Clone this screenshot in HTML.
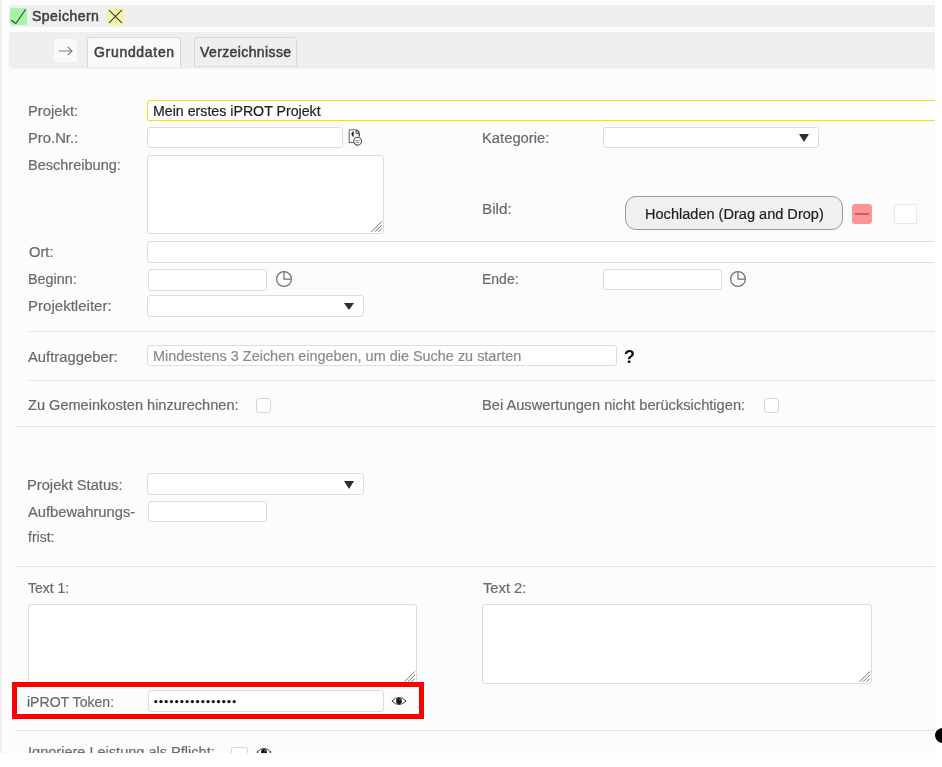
<!DOCTYPE html>
<html><head><meta charset="utf-8"><style>
html,body{margin:0;padding:0;}
body{width:942px;height:767px;overflow:hidden;background:#fff;position:relative;font-family:"Liberation Sans",sans-serif;}
#c{position:absolute;left:0;top:0;width:935px;height:753px;overflow:hidden;background:#fcfcfc;}
.b{position:absolute;}
.t{position:absolute;white-space:pre;will-change:transform;line-height:20px;transform-origin:0 0;font-family:"Liberation Sans",sans-serif;}
</style></head><body>
<div id="c">
<div class="b" style="left:0px;top:0px;width:2px;height:753px;background:#efefef;"></div>
<div class="b" style="left:9px;top:5px;width:940px;height:22px;background:#efefef;border-radius:3px;"></div>
<div class="b" style="left:10px;top:8px;width:17px;height:17px;background:#a4f5a4;border-radius:3px;"></div>
<svg class="b" style="left:10px;top:8px" width="17" height="17"><path d="M1 12.3 L5.8 15.5 L15.7 1.3" fill="none" stroke="#383838" stroke-width="1.05"/></svg>
<div class="b" style="left:107px;top:8px;width:17px;height:17px;background:#f4f4a6;border-radius:3px;"></div>
<svg class="b" style="left:107px;top:8px" width="17" height="17"><path d="M2 2.1 L14.8 14.8 M14.8 2.1 L2 14.8" fill="none" stroke="#383838" stroke-width="1.05"/></svg>
<div class="b" style="left:9px;top:32px;width:940px;height:36px;background:#efefef;border-radius:4px;box-shadow:0 1px 1px rgba(0,0,0,0.04);"></div>
<div class="b" style="left:54px;top:39px;width:23px;height:23px;background:#fafafa;border-radius:3px;"></div>
<svg class="b" style="left:58px;top:45px" width="16" height="12"><path d="M1 6 H14 M9.8 1.8 L14 6 L9.8 10.2" fill="none" stroke="#7a7a7a" stroke-width="1.1"/></svg>
<div class="b" style="left:87px;top:37px;width:94px;height:30px;background:#f9f9f9;border:1px solid #d9d9d9;border-bottom:none;border-radius:3px 3px 0 0;box-sizing:border-box;"></div>
<div class="b" style="left:194px;top:37px;width:103px;height:30px;background:#efefef;border:1px solid #d9d9d9;border-radius:3px 3px 0 0;box-sizing:border-box;"></div>
<div class="b" style="left:147px;top:100px;width:853px;height:21px;border:1px solid #ffdc10;border-radius:3px;background:#fff;box-sizing:border-box;box-shadow:0 0 0.8px rgba(255,215,0,0.6);"></div>
<div class="b" style="left:147px;top:127px;width:196px;height:21px;border:1px solid #dcdcdc;border-radius:3px;background:#fff;box-sizing:border-box;"></div>
<svg class="b" style="left:347px;top:128px" width="16" height="18"><path d="M2.2 1.8 H8.5 M2.2 1.8 V14.5 H6.5" fill="none" stroke="#6a6a6a" stroke-width="1.1"/><path d="M8.6 1.9 Q12 3 12.3 6.5 V8.5" fill="none" stroke="#3a3a3a" stroke-width="1.3"/><path d="M9 2.5 V5.5 H11.5" fill="none" stroke="#555" stroke-width="1"/><path d="M6.2 3.6 Q3.2 5.8 6.2 8.6 Z" fill="#2a2a2a" stroke="#2a2a2a" stroke-width="0.8"/><circle cx="10.6" cy="13.2" r="3.9" fill="#fff" stroke="#4a4a4a" stroke-width="1.1"/><path d="M8.6 12.6 H12.6 M8.8 14.4 H12.4" stroke="#777" stroke-width="0.9"/></svg>
<div class="b" style="left:147px;top:155px;width:237px;height:79px;border:1px solid #dcdcdc;border-radius:3px;background:#fff;box-sizing:border-box;"></div>
<svg class="b" style="left:370px;top:220px" width="14" height="14"><path d="M1.5 11.8 L11.8 1.5 M5 11.8 L11.8 5 M8.5 11.8 L11.8 8.5" stroke="#5e5e5e" stroke-width="0.9" fill="none"/></svg>
<div class="b" style="left:603px;top:127px;width:216px;height:21px;border:1px solid #dcdcdc;border-radius:3px;background:#fff;box-sizing:border-box;"></div>
<svg class="b" style="left:799px;top:134px" width="10" height="8"><polygon points="0,0 10,0 5.0,8" fill="#2e2e2e"/></svg>
<div class="b" style="left:625px;top:196px;width:218px;height:34px;background:#f0f0f0;border:1px solid #9a9a9a;border-radius:11px;box-sizing:border-box;"></div>
<div class="b" style="left:852px;top:204px;width:20px;height:20px;background:#ff9494;border-radius:3px;"></div>
<div class="b" style="left:855px;top:213px;width:14px;height:2px;background:#b06a6a;"></div>
<div class="b" style="left:894px;top:204px;width:23px;height:20px;background:#fff;border:1px solid #e9e9e9;box-sizing:border-box;box-shadow:0 0 1px rgba(0,0,0,0.06);"></div>
<div class="b" style="left:147px;top:241px;width:853px;height:22px;border:1px solid #dcdcdc;border-radius:3px;background:#fff;box-sizing:border-box;"></div>
<div class="b" style="left:148px;top:269px;width:119px;height:22px;border:1px solid #dcdcdc;border-radius:3px;background:#fff;box-sizing:border-box;"></div>
<svg class="b" style="left:275px;top:270px" width="18" height="18"><circle cx="9" cy="9" r="7.4" fill="none" stroke="#707070" stroke-width="1.25"/><path d="M9 2 V9.2 H16" fill="none" stroke="#707070" stroke-width="1.25"/></svg>
<div class="b" style="left:603px;top:269px;width:119px;height:21px;border:1px solid #dcdcdc;border-radius:3px;background:#fff;box-sizing:border-box;"></div>
<svg class="b" style="left:729px;top:270px" width="18" height="18"><circle cx="9" cy="9" r="7.4" fill="none" stroke="#707070" stroke-width="1.25"/><path d="M9 2 V9.2 H16" fill="none" stroke="#707070" stroke-width="1.25"/></svg>
<div class="b" style="left:147px;top:295px;width:217px;height:22px;border:1px solid #dcdcdc;border-radius:3px;background:#fff;box-sizing:border-box;"></div>
<svg class="b" style="left:344px;top:303px" width="10" height="7"><polygon points="0,0 10,0 5.0,7" fill="#2e2e2e"/></svg>
<div class="b" style="left:28px;top:331px;width:910px;height:1px;background:#e6e6e6;"></div>
<div class="b" style="left:147px;top:345px;width:470px;height:21px;border:1px solid #dcdcdc;border-radius:3px;background:#fff;box-sizing:border-box;"></div>
<div class="b" style="left:28px;top:380px;width:910px;height:1px;background:#e6e6e6;"></div>
<div class="b" style="left:256px;top:398px;width:15px;height:15px;border:1px solid #d6d6d6;border-radius:3px;background:#fff;box-sizing:border-box;"></div>
<div class="b" style="left:764px;top:398px;width:15px;height:15px;border:1px solid #d6d6d6;border-radius:3px;background:#fff;box-sizing:border-box;"></div>
<div class="b" style="left:17px;top:426px;width:920px;height:1px;background:#e3e3e3;"></div>
<div class="b" style="left:147px;top:473px;width:217px;height:22px;border:1px solid #dcdcdc;border-radius:3px;background:#fff;box-sizing:border-box;"></div>
<svg class="b" style="left:344px;top:481px" width="10" height="8"><polygon points="0,0 10,0 5.0,8" fill="#2e2e2e"/></svg>
<div class="b" style="left:148px;top:501px;width:119px;height:21px;border:1px solid #dcdcdc;border-radius:3px;background:#fff;box-sizing:border-box;"></div>
<div class="b" style="left:17px;top:566px;width:920px;height:0px;border-top:1px dotted #d0d0d0;"></div>
<div class="b" style="left:28px;top:604px;width:389px;height:80px;border:1px solid #dcdcdc;border-radius:3px;background:#fff;box-sizing:border-box;"></div>
<svg class="b" style="left:403px;top:670px" width="14" height="14"><path d="M1.5 11.8 L11.8 1.5 M5 11.8 L11.8 5 M8.5 11.8 L11.8 8.5" stroke="#5e5e5e" stroke-width="0.9" fill="none"/></svg>
<div class="b" style="left:482px;top:604px;width:390px;height:80px;border:1px solid #dcdcdc;border-radius:3px;background:#fff;box-sizing:border-box;"></div>
<svg class="b" style="left:858px;top:670px" width="14" height="14"><path d="M1.5 11.8 L11.8 1.5 M5 11.8 L11.8 5 M8.5 11.8 L11.8 8.5" stroke="#5e5e5e" stroke-width="0.9" fill="none"/></svg>
<div class="b" style="left:12px;top:682px;width:412px;height:37px;border:5px solid #ff0000;box-sizing:border-box;background:#fcfcfc;"></div>
<div class="b" style="left:148px;top:690px;width:236px;height:22px;border:1px solid #dcdcdc;border-radius:3px;background:#fff;box-sizing:border-box;"></div>
<svg class="b" style="left:391px;top:696px" width="16" height="10"><path d="M0.9 5 Q8 -2 15.1 5 Q8 12 0.9 5 Z" fill="#fff" stroke="#3a3a3a" stroke-width="1"/><circle cx="8" cy="5" r="2.9" fill="#111"/><circle cx="9" cy="3.8" r="0.8" fill="#888"/></svg>
<div class="b" style="left:17px;top:730px;width:920px;height:0px;border-top:1px dotted #d0d0d0;"></div>
<div class="b" style="left:231px;top:747px;width:17px;height:15px;border:1px solid #d6d6d6;border-radius:3px;background:#fff;box-sizing:border-box;"></div>
<svg class="b" style="left:256px;top:747px" width="16" height="10"><path d="M0.9 5 Q8 -2 15.1 5 Q8 12 0.9 5 Z" fill="#fff" stroke="#3a3a3a" stroke-width="1"/><circle cx="8" cy="5" r="2.9" fill="#111"/><circle cx="9" cy="3.8" r="0.8" fill="#888"/></svg>
<svg class="b" style="left:150px;top:696px" width="92" height="12"><circle cx="5.75" cy="5.6" r="1.65" fill="#111"/><circle cx="10.98" cy="5.6" r="1.65" fill="#111"/><circle cx="16.21" cy="5.6" r="1.65" fill="#111"/><circle cx="21.44" cy="5.6" r="1.65" fill="#111"/><circle cx="26.67" cy="5.6" r="1.65" fill="#111"/><circle cx="31.90" cy="5.6" r="1.65" fill="#111"/><circle cx="37.13" cy="5.6" r="1.65" fill="#111"/><circle cx="42.36" cy="5.6" r="1.65" fill="#111"/><circle cx="47.59" cy="5.6" r="1.65" fill="#111"/><circle cx="52.82" cy="5.6" r="1.65" fill="#111"/><circle cx="58.05" cy="5.6" r="1.65" fill="#111"/><circle cx="63.28" cy="5.6" r="1.65" fill="#111"/><circle cx="68.51" cy="5.6" r="1.65" fill="#111"/><circle cx="73.74" cy="5.6" r="1.65" fill="#111"/><circle cx="78.97" cy="5.6" r="1.65" fill="#111"/><circle cx="84.20" cy="5.6" r="1.65" fill="#111"/></svg>
<span class="t" style="left:32.00px;top:5.60px;font-size:14px;-webkit-text-stroke:0.5px #404040;color:#404040;letter-spacing:0.475px;">Speichern</span>
<span class="t" style="left:94.00px;top:41.70px;font-size:14px;-webkit-text-stroke:0.5px #404040;color:#404040;letter-spacing:0.689px;">Grunddaten</span>
<span class="t" style="left:200.00px;top:41.70px;font-size:14px;-webkit-text-stroke:0.5px #404040;color:#404040;letter-spacing:0.392px;">Verzeichnisse</span>
<span class="t" style="left:27.64px;top:100.60px;font-size:14px;font-weight:400;-webkit-text-stroke:0.2px #6a6a6a;color:#6a6a6a;transform:scaleX(1.0565);">Projekt:</span>
<span class="t" style="left:27.64px;top:128.00px;font-size:14px;font-weight:400;-webkit-text-stroke:0.2px #6a6a6a;color:#6a6a6a;transform:scaleX(1.0565);">Pro.Nr.:</span>
<span class="t" style="left:27.66px;top:154.50px;font-size:14px;font-weight:400;-webkit-text-stroke:0.2px #6a6a6a;color:#6a6a6a;transform:scaleX(1.0375);">Beschreibung:</span>
<span class="t" style="left:481.55px;top:128.10px;font-size:14px;font-weight:400;-webkit-text-stroke:0.2px #6a6a6a;color:#6a6a6a;transform:scaleX(1.0548);">Kategorie:</span>
<span class="t" style="left:481.91px;top:199.30px;font-size:14px;font-weight:400;-webkit-text-stroke:0.2px #6a6a6a;color:#6a6a6a;transform:scaleX(1.0880);">Bild:</span>
<span class="t" style="left:28.70px;top:242.20px;font-size:14px;font-weight:400;-webkit-text-stroke:0.2px #6a6a6a;color:#6a6a6a;transform:scaleX(1.0522);">Ort:</span>
<span class="t" style="left:27.67px;top:269.30px;font-size:14px;font-weight:400;-webkit-text-stroke:0.2px #6a6a6a;color:#6a6a6a;transform:scaleX(1.0283);">Beginn:</span>
<span class="t" style="left:27.62px;top:295.70px;font-size:14px;font-weight:400;-webkit-text-stroke:0.2px #6a6a6a;color:#6a6a6a;transform:scaleX(1.0750);">Projektleiter:</span>
<span class="t" style="left:482.00px;top:269.30px;font-size:14px;font-weight:400;-webkit-text-stroke:0.2px #6a6a6a;color:#6a6a6a;">Ende:</span>
<span class="t" style="left:28.00px;top:346.50px;font-size:14px;font-weight:400;-webkit-text-stroke:0.2px #6a6a6a;color:#6a6a6a;transform:scaleX(1.0571);">Auftraggeber:</span>
<span class="t" style="left:28.00px;top:395.00px;font-size:14px;font-weight:400;-webkit-text-stroke:0.2px #6a6a6a;color:#6a6a6a;transform:scaleX(1.0406);">Zu Gemeinkosten hinzurechnen:</span>
<span class="t" style="left:482.25px;top:395.00px;font-size:14px;font-weight:400;-webkit-text-stroke:0.2px #6a6a6a;color:#6a6a6a;transform:scaleX(1.0468);">Bei Auswertungen nicht berücksichtigen:</span>
<span class="t" style="left:26.95px;top:474.50px;font-size:14px;font-weight:400;-webkit-text-stroke:0.2px #6a6a6a;color:#6a6a6a;transform:scaleX(1.0494);">Projekt Status:</span>
<span class="t" style="left:28.00px;top:501.60px;font-size:14px;font-weight:400;-webkit-text-stroke:0.2px #6a6a6a;color:#6a6a6a;transform:scaleX(1.0510);">Aufbewahrungs-</span>
<span class="t" style="left:28.00px;top:527.00px;font-size:14px;font-weight:400;-webkit-text-stroke:0.2px #6a6a6a;color:#6a6a6a;">frist:</span>
<span class="t" style="left:28.30px;top:577.80px;font-size:14px;font-weight:400;-webkit-text-stroke:0.2px #6a6a6a;color:#6a6a6a;">Text 1:</span>
<span class="t" style="left:482.70px;top:577.80px;font-size:14px;font-weight:400;-webkit-text-stroke:0.2px #6a6a6a;color:#6a6a6a;transform:scaleX(1.0500);">Text 2:</span>
<span class="t" style="left:27.40px;top:691.50px;font-size:14px;font-weight:400;-webkit-text-stroke:0.2px #6a6a6a;color:#6a6a6a;transform:scaleX(1.0047);">iPROT Token:</span>
<span class="t" style="left:27.56px;top:742.30px;font-size:14px;font-weight:400;-webkit-text-stroke:0.2px #6a6a6a;color:#6a6a6a;transform:scaleX(1.0388);">Ignoriere Leistung als Pflicht:</span>
<span class="t" style="left:152.59px;top:100.80px;font-size:14px;font-weight:400;-webkit-text-stroke:0.2px #1e1e1e;color:#1e1e1e;transform:scaleX(1.0133);">Mein erstes iPROT Projekt</span>
<span class="t" style="left:152.57px;top:345.70px;font-size:14px;font-weight:400;-webkit-text-stroke:0.2px #8a8a8a;color:#8a8a8a;transform:scaleX(1.0309);">Mindestens 3 Zeichen eingeben, um die Suche zu starten</span>
<span class="t" style="left:644.56px;top:203.60px;font-size:14px;font-weight:400;-webkit-text-stroke:0.2px #222222;color:#222222;transform:scaleX(1.0394);">Hochladen (Drag and Drop)</span>
<span class="t" style="left:623.51px;top:346.80px;font-size:18px;font-weight:700;color:#111111;transform:scaleX(0.9889);">?</span>
</div>
<div class="b" style="left:934.5px;top:727.8px;width:15.4px;height:15.4px;border-radius:50%;background:#000;"></div>
</body></html>
